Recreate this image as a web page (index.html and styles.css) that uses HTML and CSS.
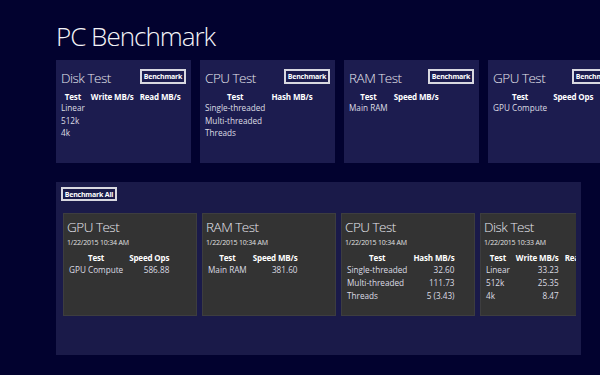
FILE: index.html
```html
<!DOCTYPE html>
<html>
<head>
<meta charset="utf-8">
<link rel="stylesheet" href="styles.css">
</head>
<body>
<div class="page">
  <h1 class="page-title">PC Benchmark</h1>
  <div class="tests">
    <div class="test-card">
      <div class="test-head"><span class="test-title">Disk Test</span><button class="btn">Benchmark</button></div>
      <div class="grid g3">
        <span class="th">Test</span><span class="th">Write MB/s</span><span class="th">Read MB/s</span>
        <span class="td">Linear</span><span></span><span></span>
        <span class="td">512k</span><span></span><span></span>
        <span class="td">4k</span><span></span><span></span>
      </div>
    </div>
    <div class="test-card">
      <div class="test-head"><span class="test-title">CPU Test</span><button class="btn">Benchmark</button></div>
      <div class="grid g2">
        <span class="th">Test</span><span class="th">Hash MB/s</span>
        <span class="td">Single-threaded</span><span></span>
        <span class="td">Multi-threaded</span><span></span>
        <span class="td">Threads</span><span></span>
      </div>
    </div>
    <div class="test-card">
      <div class="test-head"><span class="test-title">RAM Test</span><button class="btn">Benchmark</button></div>
      <div class="grid g2">
        <span class="th">Test</span><span class="th">Speed MB/s</span>
        <span class="td">Main RAM</span><span></span>
      </div>
    </div>
    <div class="test-card">
      <div class="test-head"><span class="test-title">GPU Test</span><button class="btn">Benchmark</button></div>
      <div class="grid g2">
        <span class="th">Test</span><span class="th">Speed Ops</span>
        <span class="td">GPU Compute</span><span></span>
      </div>
    </div>
  </div>

  <div class="results">
    <button class="btn btn-all">Benchmark All</button>
    <div class="result-row">
      <div class="result-card">
        <div class="r-title">GPU Test</div>
        <div class="r-date">1/22/2015 10:34 AM</div>
        <div class="grid g2 rgrid">
          <span class="th">Test</span><span class="th">Speed Ops</span>
          <span class="td">GPU Compute</span><span class="td num">586.88</span>
        </div>
      </div>
      <div class="result-card">
        <div class="r-title">RAM Test</div>
        <div class="r-date">1/22/2015 10:34 AM</div>
        <div class="grid g2 rgrid">
          <span class="th">Test</span><span class="th">Speed MB/s</span>
          <span class="td">Main RAM</span><span class="td num">381.60</span>
        </div>
      </div>
      <div class="result-card">
        <div class="r-title">CPU Test</div>
        <div class="r-date">1/22/2015 10:34 AM</div>
        <div class="grid g2 rgrid">
          <span class="th">Test</span><span class="th">Hash MB/s</span>
          <span class="td">Single-threaded</span><span class="td num">32.60</span>
          <span class="td">Multi-threaded</span><span class="td num">111.73</span>
          <span class="td">Threads</span><span class="td num">5 (3.43)</span>
        </div>
      </div>
      <div class="result-card">
        <div class="r-title">Disk Test</div>
        <div class="r-date">1/22/2015 10:33 AM</div>
        <div class="grid g3 rgrid">
          <span class="th">Test</span><span class="th">Write MB/s</span><span class="th">Read MB/s</span>
          <span class="td">Linear</span><span class="td num">33.23</span><span class="td num">145.02</span>
          <span class="td">512k</span><span class="td num">25.35</span><span class="td num">138.40</span>
          <span class="td">4k</span><span class="td num">8.47</span><span class="td num">12.10</span>
        </div>
      </div>
    </div>
  </div>
</div>
</body>
</html>
```

FILE: styles.css
```css
html, body {
  margin: 0;
  padding: 0;
  background: #02022f;
  width: 600px;
  height: 375px;
  overflow: hidden;
}
body {
  font-family: "Open Sans", "Noto Sans", sans-serif;
  color: #e8e8ee;
}
.page {
  padding: 18px 0 0 56px;
}
.page-title {
  margin: 0;
  font-family: "Open Sans", sans-serif;
  font-weight: 300;
  font-size: 26px;
  line-height: 36px;
  height: 42px;
  color: #f4f4f8;
  letter-spacing: -1px;
  white-space: nowrap;
}
.tests {
  display: flex;
  gap: 9px;
  width: 700px;
}
.test-card {
  flex: 0 0 135px;
  min-width: 0;
  overflow: hidden;
  height: 103px;
  box-sizing: border-box;
  background: #1c1c4f;
  padding: 9px 5px 0 5px;
}
.test-head {
  display: flex;
  justify-content: space-between;
  align-items: flex-start;
  height: 22px;
}
.test-title, .r-title {
  font-weight: 300;
  font-size: 13.5px;
  line-height: 18px;
  color: #e6e6ee;
  white-space: nowrap;
  letter-spacing: -0.5px;
}
.btn {
  font-family: "Open Sans", sans-serif;
  font-weight: 700;
  font-size: 7px;
  letter-spacing: -0.2px;
  color: #ffffff;
  background: transparent;
  border: 2px solid #d8d8e0;
  height: 15px;
  width: 46px;
  padding: 0;
  line-height: 11px;
  box-sizing: border-box;
  white-space: nowrap;
  flex: 0 0 auto;
}
.grid {
  display: grid;
  column-gap: 6px;
  justify-content: start;
  font-size: 8.2px;
  line-height: 12.5px;
  width: max-content;
}
.g2 { grid-template-columns: max-content max-content; }
.g3 { grid-template-columns: max-content max-content max-content; }
.th {
  font-weight: 700;
  font-size: 8px;
  letter-spacing: -0.15px;
  text-align: center;
  color: #ffffff;
  line-height: 11px;
  white-space: nowrap;
}
.td {
  color: #dcdce4;
  white-space: nowrap;
}
.num { text-align: right; }

.results {
  margin-top: 19px;
  width: 525px;
  height: 173px;
  box-sizing: border-box;
  background: #1a1a49;
  padding: 5px 5px 0 5px;
}
.btn-all {
  width: 56px;
  height: 14px;
  display: block;
}
.result-row {
  margin-top: 12px;
  margin-left: 2px;
  display: flex;
  gap: 5px;
  overflow: hidden;
  width: 513px;
}
.result-card {
  flex: 0 0 134px;
  height: 103px;
  box-sizing: border-box;
  background: #333333;
  border: 1px solid #3d3d3f;
  padding: 4px 3px 0 3px;
  overflow: hidden;
}
.r-date {
  font-size: 7px;
  line-height: 14px;
  color: #e0e0e0;
  margin-bottom: 2px;
  letter-spacing: -0.2px;
}
.rgrid {
  padding-left: 2px;
  line-height: 13px;
}
.rgrid .th { line-height: 11px; }
```
